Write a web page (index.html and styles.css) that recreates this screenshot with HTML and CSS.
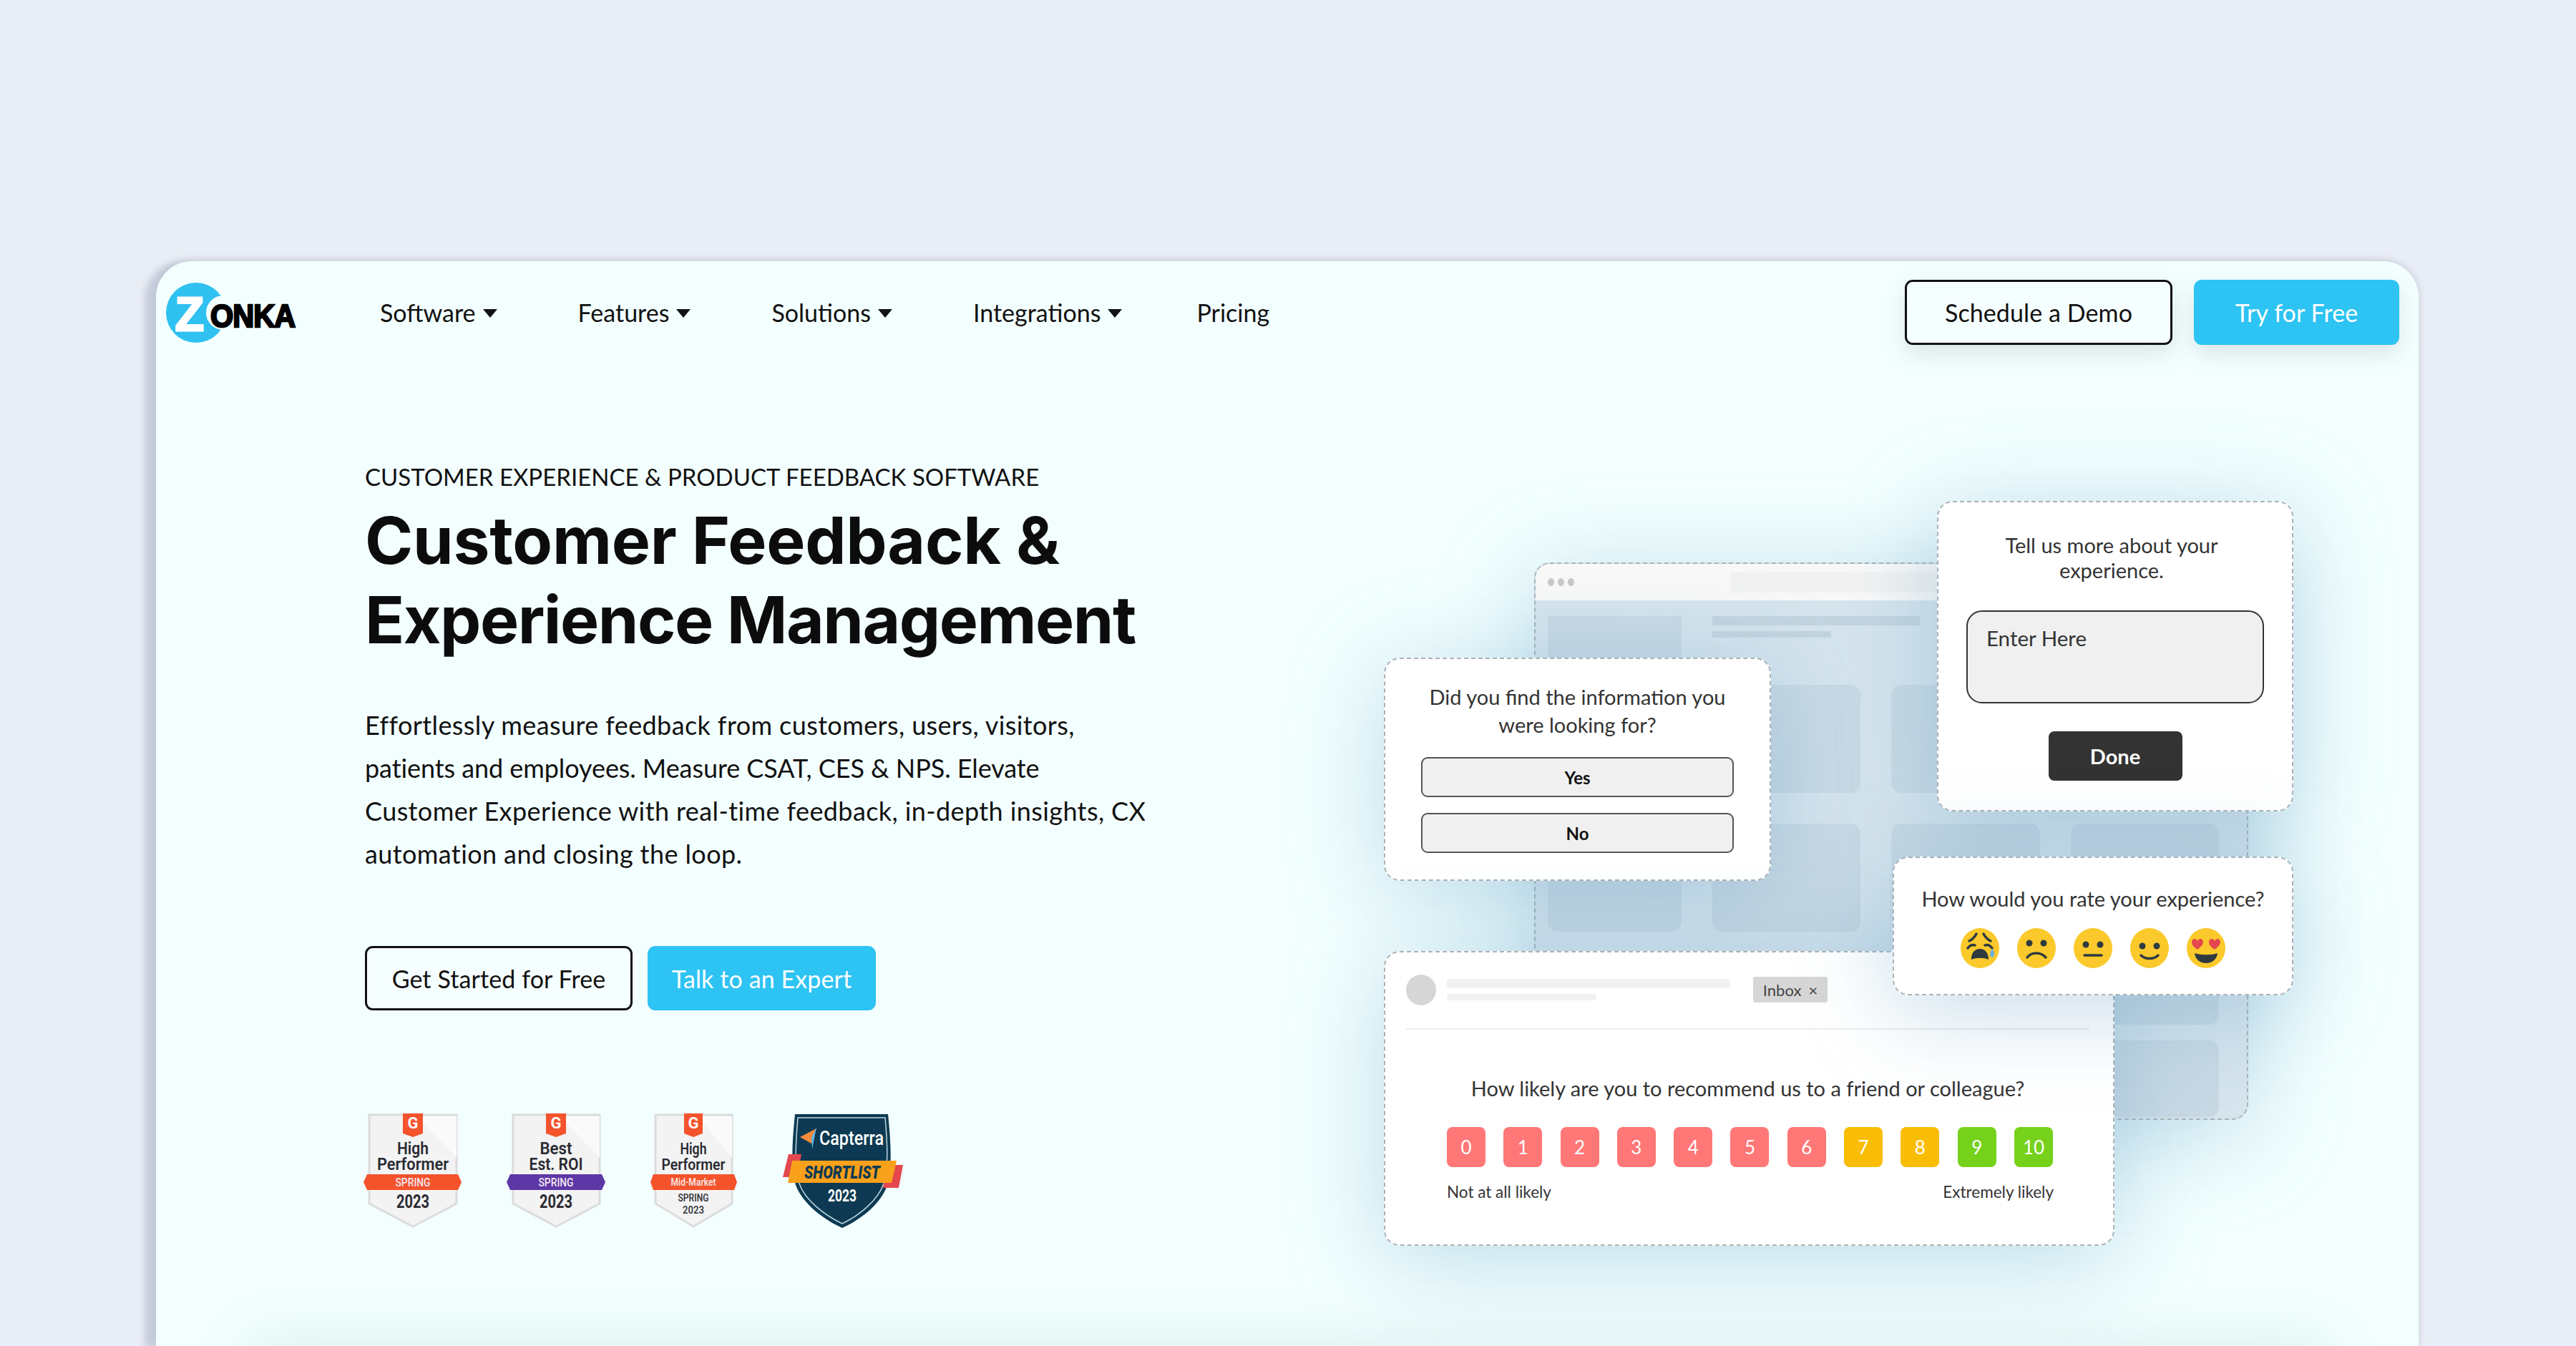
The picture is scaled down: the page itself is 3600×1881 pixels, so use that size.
FILE: index.html
```html
<!DOCTYPE html>
<html lang="en">
<head>
  <meta charset="UTF-8" />
  <title>Zonka Feedback</title>
  <link rel="stylesheet" href="styles.css">
</head>
<body>
<div class="frame">
  <header class="topbar">
    <div class="logo">
      <svg width="84" height="84" viewBox="0 0 84 84">
        <circle cx="42" cy="42" r="42" fill="#2fc1f0"/>
        <circle cx="80" cy="42" r="24" fill="#f3ffff"/>
        <text x="33" y="67" class="logo-z" text-anchor="middle">Z</text>
      </svg>
      <span class="logo-text">ONKA</span>
    </div>
    <nav class="nav">
      <a class="nav-item">Software<i class="caret"></i></a>
      <a class="nav-item">Features<i class="caret"></i></a>
      <a class="nav-item">Solutions<i class="caret"></i></a>
      <a class="nav-item">Integrations<i class="caret"></i></a>
      <a class="nav-item nav-pricing">Pricing</a>
    </nav>
    <div class="top-actions">
      <a class="btn btn-outline btn-top btn-demo">Schedule a Demo</a>
      <a class="btn btn-blue btn-top btn-try">Try for Free</a>
    </div>
  </header>

  <section class="hero">
    <div class="copy">
      <p class="eyebrow">CUSTOMER EXPERIENCE &amp; PRODUCT FEEDBACK SOFTWARE</p>
      <h1>Customer Feedback &amp;<br><span class="h1-tight">Experience Management</span></h1>
      <p class="lead">Effortlessly measure feedback from customers, users, visitors,<br><span class="lead-tight">patients and employees. Measure CSAT, CES &amp; NPS. Elevate</span><br>Customer Experience with real-time feedback, in-depth insights, CX<br>automation and closing the loop.</p>
      <div class="cta">
        <a class="btn btn-outline btn-start">Get Started for Free</a>
        <a class="btn btn-blue btn-talk">Talk to an Expert</a>
      </div>
      <div class="badges">
        <svg class="badge-a" width="137" height="160" viewBox="0 0 137 160">
          <path class="shield" d="M8 2H130V126L69 158L8 126Z"/>
          <path class="shine" d="M130 4V62L74 4Z"/>
          <path class="tab" d="M55 0H83V28L69 33L55 28Z"/>
          <text x="69" y="21" class="tab-g" text-anchor="middle">G</text>
          <text x="69" y="57" class="b-title" text-anchor="middle" textLength="44" lengthAdjust="spacingAndGlyphs">High</text>
          <text x="69" y="79" class="b-title" text-anchor="middle" textLength="100" lengthAdjust="spacingAndGlyphs">Performer</text>
          <path class="rib-orange" d="M5 85H132L137 96L132 107H5L0 96Z"/>
          <text x="69" y="102" class="b-season" text-anchor="middle" textLength="49" lengthAdjust="spacingAndGlyphs">SPRING</text>
          <text x="69" y="132" class="b-year" text-anchor="middle" textLength="46" lengthAdjust="spacingAndGlyphs">2023</text>
        </svg>
        <svg class="badge-b" width="138" height="160" viewBox="0 0 138 160">
          <path class="shield" d="M9 2H130V126L69 158L9 126Z"/>
          <path class="shine" d="M130 4V62L74 4Z"/>
          <path class="tab" d="M55 0H83V28L69 33L55 28Z"/>
          <text x="69" y="21" class="tab-g" text-anchor="middle">G</text>
          <text x="69" y="57" class="b-title" text-anchor="middle" textLength="45" lengthAdjust="spacingAndGlyphs">Best</text>
          <text x="69" y="79" class="b-title" text-anchor="middle" textLength="75" lengthAdjust="spacingAndGlyphs">Est. ROI</text>
          <path class="rib-purple" d="M5 85H133L138 96L133 107H5L0 96Z"/>
          <text x="69" y="102" class="b-season" text-anchor="middle" textLength="49" lengthAdjust="spacingAndGlyphs">SPRING</text>
          <text x="69" y="132" class="b-year" text-anchor="middle" textLength="46" lengthAdjust="spacingAndGlyphs">2023</text>
        </svg>
        <svg class="badge-c" width="121" height="160" viewBox="0 0 121 160">
          <path class="shield" d="M7 2H114V126L60 158L7 126Z"/>
          <path class="shine" d="M114 4V62L66 4Z"/>
          <path class="tab" d="M47 0H73V28L60 33L47 28Z"/>
          <text x="60" y="21" class="tab-g" text-anchor="middle">G</text>
          <text x="60" y="57" class="b-title-sm" text-anchor="middle" textLength="37" lengthAdjust="spacingAndGlyphs">High</text>
          <text x="60" y="79" class="b-title-sm" text-anchor="middle" textLength="89" lengthAdjust="spacingAndGlyphs">Performer</text>
          <path class="rib-orange" d="M4 85H117L121 96L117 107H4L0 96Z"/>
          <text x="60" y="101" class="b-market" text-anchor="middle" textLength="63" lengthAdjust="spacingAndGlyphs">Mid-Market</text>
          <text x="60" y="123" class="b-small" text-anchor="middle" textLength="43" lengthAdjust="spacingAndGlyphs">SPRING</text>
          <text x="60" y="140" class="b-small" text-anchor="middle" textLength="30" lengthAdjust="spacingAndGlyphs">2023</text>
        </svg>
        <svg class="badge-d" width="168" height="160" viewBox="0 0 168 160">
          <path class="cap-shield" d="M17 1H147C151 40 153 75 146 100C138 125 110 148 83 160C56 148 27 125 18 100C11 75 13 40 17 1Z"/>
          <path class="cap-line" d="M21 6H143C146 40 148 75 141 98C133 121 108 142 83 154C58 142 31 121 23 98C16 75 18 40 21 6Z"/>
          <path fill="#f58a3c" d="M24 33L47 21L40 42Z"/>
          <path fill="#5fb6e8" d="M47 19L41 50L40 34Z"/>
          <text x="96" y="44" class="cap-name" text-anchor="middle" textLength="90" lengthAdjust="spacingAndGlyphs">Capterra</text>
          <path fill="#e4484e" d="M8 57H26L20 89H0Z"/>
          <path fill="#e4484e" d="M146 72H168L162 104H140Z"/>
          <path fill="#f9a11b" d="M13 66H159L152 97H7Z"/>
          <text x="83" y="91" class="cap-short" text-anchor="middle" textLength="106" lengthAdjust="spacingAndGlyphs">SHORTLIST</text>
          <text x="83" y="123" class="cap-year" text-anchor="middle" textLength="40" lengthAdjust="spacingAndGlyphs">2023</text>
        </svg>
      </div>
    </div>

    <div class="canvas">
      <div class="browser">
        <div class="browser-bar">
          <span class="dots"><i></i><i></i><i></i></span>
          <span class="url"></span>
        </div>
        <div class="browser-body">
          <div class="blk span-2"></div>
          <div class="lines">
            <div class="ln ln-long"></div>
            <div class="ln ln-short"></div>
          </div>
          <div class="blk col-2"></div><div class="blk"></div><div class="blk"></div>
          <div class="blk"></div><div class="blk"></div><div class="blk"></div><div class="blk"></div>
          <div class="blk col-4"></div>
          <div class="blk col-4 blk-last"></div>
        </div>
      </div>

      <div class="card card-find">
        <p class="q q-find">Did you find the information you<br>were looking for?</p>
        <div class="choice">Yes</div>
        <div class="choice">No</div>
      </div>

      <div class="card card-nps">
        <div class="mail-head">
          <span class="avatar"></span>
          <div class="mail-lines">
            <div class="ml ml-long"></div>
            <div class="ml ml-short"></div>
          </div>
          <span class="inbox">Inbox <b>×</b></span>
        </div>
        <p class="q q-nps">How likely are you to recommend us to a friend or colleague?</p>
        <div class="scale">
          <span class="n red">0</span><span class="n red">1</span><span class="n red">2</span><span class="n red">3</span><span class="n red">4</span><span class="n red">5</span><span class="n red">6</span><span class="n amber">7</span><span class="n amber">8</span><span class="n green">9</span><span class="n green">10</span>
        </div>
        <div class="scale-labels"><span>Not at all likely</span><span>Extremely likely</span></div>
      </div>

      <div class="card card-more">
        <p class="q q-more">Tell us more about your<br>experience.</p>
        <div class="textbox">Enter Here</div>
        <div class="done">Done</div>
      </div>

      <div class="card card-rate">
        <p class="q q-rate">How would you rate your experience?</p>
        <div class="faces">
          <svg width="54" height="56" viewBox="0 0 54 56">
            <ellipse cx="27" cy="28" rx="27" ry="28" class="face"/>
            <path class="stroke" d="M22 8C19 14 16 16 12 18M32 8C35 14 38 16 42 18M10 28C13 24 17 23 20 24M44 28C41 24 37 23 34 24"/>
            <path class="fill-dark" d="M15 44C15 31 23 29 27 29C33 29 39 33 39 44C32 41 22 41 15 44Z"/>
            <path fill="#6eaede" d="M44 28C47 33 48 36 46 40C44 42 41 40 41 37C41 34 43 31 44 28Z"/>
          </svg>
          <svg width="54" height="56" viewBox="0 0 54 56">
            <ellipse cx="27" cy="28" rx="27" ry="28" class="face"/>
            <ellipse cx="17" cy="21" rx="4.5" ry="4.5" class="fill-dark"/>
            <ellipse cx="37" cy="21" rx="4.5" ry="4.5" class="fill-dark"/>
            <path class="stroke" d="M14 41C20 33 33 33 40 41"/>
          </svg>
          <svg width="54" height="56" viewBox="0 0 54 56">
            <ellipse cx="27" cy="28" rx="27" ry="28" class="face"/>
            <ellipse cx="17" cy="23" rx="4.5" ry="4.5" class="fill-dark"/>
            <ellipse cx="37" cy="23" rx="4.5" ry="4.5" class="fill-dark"/>
            <path class="stroke" d="M15 38H39"/>
          </svg>
          <svg width="54" height="56" viewBox="0 0 54 56">
            <ellipse cx="27" cy="28" rx="27" ry="28" class="face"/>
            <ellipse cx="17" cy="25" rx="4.5" ry="4.5" class="fill-dark"/>
            <ellipse cx="37" cy="25" rx="4.5" ry="4.5" class="fill-dark"/>
            <path class="stroke" d="M15 38C21 44 33 44 39 38"/>
          </svg>
          <svg width="54" height="56" viewBox="0 0 54 56">
            <ellipse cx="27" cy="28" rx="27" ry="28" class="face"/>
            <path fill="#e4474f" d="M15 30C9 26 7 23 7 19C8 14 13 14 15 18C17 14 22 14 23 19C23 23 20 26 15 30Z"/>
            <path fill="#e4474f" d="M39 30C33 26 31 23 31 19C32 14 37 14 39 18C41 14 46 14 47 19C47 23 44 26 39 30Z"/>
            <path class="fill-dark" d="M11 35C20 38 34 38 43 35C42 45 34 49 27 49C20 49 12 45 11 35Z"/>
          </svg>
        </div>
      </div>
    </div>
  </section>
  <div class="fold"></div>
</div>
</body>
</html>
```

FILE: styles.css
```css
* {
  box-sizing: border-box;
}

html, body {
  height: 100%;
  overflow: hidden;
}

body {
  margin: 0;
  padding: 365px 220px 0 218px;
  background: #e9edf5;
  font-family: 'Lato', 'Liberation Sans', sans-serif;
  color: #111;
}

p {
  margin: 0;
}

.frame {
  position: relative;
  width: 3162px;
  height: 1516px;
  background: #f3ffff;
  border-radius: 50px 50px 0 0;
  box-shadow: -16px 2px 10px rgba(150,160,182,0.42), 0 -4px 10px rgba(130,140,165,0.16), 3px 0 6px rgba(150,160,182,0.12);
  overflow: hidden;
}

/* shadow of the next section, only its top edge shows */
.fold {
  position: absolute;
  left: 130px;
  right: 130px;
  bottom: -60px;
  height: 60px;
  box-shadow: 0 0 80px rgba(110,150,150,0.2);
}

/* top bar */
.topbar {
  display: flex;
  align-items: center;
  height: 91px;
  margin-top: 26px;
  padding: 0 27px 0 14px;
}

.logo {
  display: flex;
  align-items: center;
  flex: none;
  width: 299px;
  height: 84px;
}

.logo svg {
  flex: none;
}

.logo-z {
  font: 900 66px 'Liberation Sans', sans-serif;
  fill: #fff;
  stroke: #fff;
  stroke-width: 3px;
}

.logo-text {
  flex: none;
  margin: 10px 0 0 -22px;
  font: 900 45px 'Liberation Sans', sans-serif;
  color: #000;
  -webkit-text-stroke: 2.5px #000;
  letter-spacing: -1px;
  transform: scaleX(0.92);
  transform-origin: left center;
}

.nav {
  display: flex;
  flex: 1;
  gap: 113px;
}

.nav-item {
  display: flex;
  align-items: center;
  font-size: 34px;
  color: #111;
}

.nav-pricing {
  margin-left: -9px;
}

.caret {
  width: 0;
  height: 0;
  margin: 3px 0 0 10px;
  border-left: 10px solid transparent;
  border-right: 10px solid transparent;
  border-top: 12px solid #111;
}

.top-actions {
  display: flex;
  gap: 30px;
}

.btn {
  display: flex;
  align-items: center;
  justify-content: center;
  height: 90px;
  border-radius: 11px;
  font-size: 34px;
  letter-spacing: 0.1px;
}

.btn-top {
  height: 91px;
  box-shadow: 0 12px 30px rgba(80,100,110,0.16);
}

.btn-outline {
  border: 3px solid #111;
  background: #f6ffff;
  color: #111;
}

.btn-blue {
  background: #2dc3f3;
  color: #fff;
}

.btn-demo { width: 374px; }
.btn-try { width: 287px; }
.btn-start { width: 374px; }
.btn-talk { width: 319px; }

/* hero */
.hero {
  display: flex;
  padding-left: 292px;
}

.copy {
  flex: none;
  width: 1130px;
  padding-top: 159px;
}

.eyebrow {
  font-size: 33px;
  line-height: 50px;
}

h1 {
  margin: 9px 0 0;
  font-family: 'Inter', sans-serif;
  font-size: 91px;
  font-weight: 700;
  line-height: 111px;
  letter-spacing: -0.25px;
  white-space: nowrap;
  color: #0c0c0c;
}

.h1-tight {
  letter-spacing: -1.5px;
}

.lead {
  margin-top: 61px;
  font-size: 36px;
  letter-spacing: 0.4px;
  line-height: 60px;
  white-space: nowrap;
}

.lead-tight {
  letter-spacing: -0.08px;
}

.cta {
  display: flex;
  gap: 21px;
  margin-top: 99px;
}

.badges {
  display: flex;
  align-items: flex-start;
  margin: 144px 0 0 -2px;
}

.badge-b { margin-left: 63px; }
.badge-c { margin-left: 63px; }
.badge-d { margin-left: 64px; }

.shield {
  fill: #f3f3f3;
  stroke: #dcdcdc;
  stroke-width: 3px;
}

.shine { fill: #fafafa; }
.tab { fill: #f4532c; }
.rib-orange { fill: #f4532c; }
.rib-purple { fill: #5e37a6; }

.tab-g {
  font: 700 22px 'Roboto', sans-serif;
  fill: #fff;
}

.b-title {
  font: 600 24px 'Roboto', sans-serif;
  fill: #2a2a32;
}

.b-title-sm {
  font: 600 22px 'Roboto', sans-serif;
  fill: #2a2a32;
}

.b-season {
  font: 500 17px 'Roboto', sans-serif;
  fill: #f3e6f0;
}

.b-market {
  font: 600 14px 'Roboto', sans-serif;
  fill: #f9e6e0;
}

.b-year {
  font: 700 25px 'Roboto', sans-serif;
  fill: #2a2a32;
}

.b-small {
  font: 600 15px 'Roboto', sans-serif;
  fill: #3a3a42;
}

.cap-shield { fill: #0d3a52; }

.cap-line {
  fill: none;
  stroke: #bcd6e2;
  stroke-width: 1.5px;
}

.cap-name {
  font: 500 27px 'Roboto', sans-serif;
  fill: #fff;
}

.cap-short {
  font: italic 900 25px 'Roboto', sans-serif;
  fill: #0d3a52;
}

.cap-year {
  font: 700 23px 'Roboto', sans-serif;
  fill: #fff;
}

/* illustration, overlapping cards on a free canvas */
.canvas {
  position: relative;
  flex: none;
  width: 1271px;
  height: 1041px;
  margin: 218px 0 0 294px;
}

.card, .browser {
  position: absolute;
  border: 2px dashed #a9b3b8;
  border-radius: 22px;
  box-shadow: 0 20px 130px rgba(95,155,195,0.36);
}

.card {
  background: #fff;
  color: #333;
}

.q {
  text-align: center;
  font-size: 29px;
  white-space: nowrap;
}

.browser {
  left: 210px;
  top: 86px;
  width: 998px;
  height: 779px;
  background: #d5e4ed;
  overflow: hidden;
}

.browser-bar {
  display: flex;
  align-items: center;
  gap: 218px;
  height: 51px;
  padding-left: 17px;
  background: #f8f8f8;
}

.dots {
  display: flex;
  gap: 5px;
}

.dots i {
  width: 9px;
  height: 11px;
  border-radius: 50%;
  background: #c8c8c8;
}

.url {
  width: 720px;
  height: 28px;
  background: #f1f1f1;
}

.browser-body {
  display: grid;
  grid-template-columns: 187px 207px 208px 207px;
  grid-template-rows: 53px 151px 151px 87px 86px;
  gap: 43px;
  padding: 22px 0 0 17px;
}

.blk {
  border-radius: 14px;
  background: #c8d9e4;
}

.span-2 {
  grid-row: span 2;
  border-radius: 0;
}

.col-2 { grid-column: 2; }
.col-4 { grid-column: 4; }
.blk-last { margin-top: -21px; }

.lines {
  grid-column: 2 / 5;
}

.ln {
  height: 13px;
  margin: 0 0 8px;
  background: #c3d4df;
}

.ln-long { width: 290px; }
.ln-short { width: 166px; height: 9px; }

/* did you find */
.card-find {
  left: 0;
  top: 219px;
  width: 541px;
  height: 312px;
  padding: 33px 50px 0;
}

.q-find {
  line-height: 39px;
  margin-bottom: 26px;
}

.choice {
  display: flex;
  align-items: center;
  justify-content: center;
  height: 56px;
  margin-bottom: 22px;
  background: #f0f0f0;
  border: 2px solid #555;
  border-radius: 9px;
  font-size: 24px;
  font-weight: 700;
  color: #111;
}

/* tell us more */
.card-more {
  left: 773px;
  top: 0;
  width: 498px;
  height: 434px;
  padding: 42px 39px 0;
}

.q-more {
  margin-right: 10px;
  line-height: 35px;
}

.textbox {
  height: 130px;
  margin-top: 39px;
  padding: 19px 26px;
  background: #f0f0f0;
  border: 2px solid #333;
  border-radius: 22px;
  font-size: 29.5px;
  line-height: 36px;
}

.done {
  display: flex;
  align-items: center;
  justify-content: center;
  width: 187px;
  height: 69px;
  margin: 39px auto 0;
  background: #333;
  border-radius: 8px;
  color: #fff;
  font-size: 29px;
  font-weight: 700;
}

/* rating */
.card-rate {
  left: 711px;
  top: 497px;
  width: 560px;
  height: 194px;
  padding-top: 38px;
}

.q-rate {
  line-height: 38px;
}

.faces {
  display: flex;
  justify-content: center;
  gap: 25px;
  margin-top: 22px;
}

.face { fill: #fbc92b; }
.fill-dark { fill: #2e3a40; }

.stroke {
  fill: none;
  stroke: #2e3a40;
  stroke-width: 3.5px;
  stroke-linecap: round;
}

/* nps */
.card-nps {
  left: 0;
  top: 629px;
  width: 1021px;
  height: 412px;
  padding: 31px 33px 0 29px;
}

.mail-head {
  position: relative;
  display: flex;
  height: 77px;
  border-bottom: 2px solid #ececec;
}

.avatar {
  width: 42px;
  height: 43px;
  margin-right: 15px;
  border-radius: 50%;
  background: #d6d6d6;
}

.mail-lines {
  width: 428px;
  padding-top: 6px;
}

.ml {
  height: 13px;
  margin-bottom: 8px;
  border-radius: 3px;
  background: #f1f1f1;
}

.ml-long { width: 396px; }
.ml-short { width: 209px; height: 9px; }

.inbox {
  display: flex;
  align-items: center;
  justify-content: center;
  gap: 10px;
  width: 104px;
  height: 36px;
  margin-top: 3px;
  border-radius: 3px;
  background: #d6d6d6;
  font-size: 22px;
  color: #444;
}

.inbox b {
  font-weight: 400;
}

.q-nps {
  margin: 63px 0 0;
  line-height: 38px;
}

.scale {
  display: flex;
  gap: 25.3px;
  margin: 35px 0 0 57px;
}

.n {
  display: flex;
  align-items: center;
  justify-content: center;
  width: 54px;
  height: 56px;
  border-radius: 8px;
  color: #fff;
  font-size: 26px;
}

.red { background: #ff7777; }
.amber { background: #f9bd05; }
.green { background: #76d11b; }

.scale-labels {
  display: flex;
  justify-content: space-between;
  width: 848px;
  margin: 21px 0 0 57px;
  font-size: 22.5px;
  line-height: 28px;
}
```
